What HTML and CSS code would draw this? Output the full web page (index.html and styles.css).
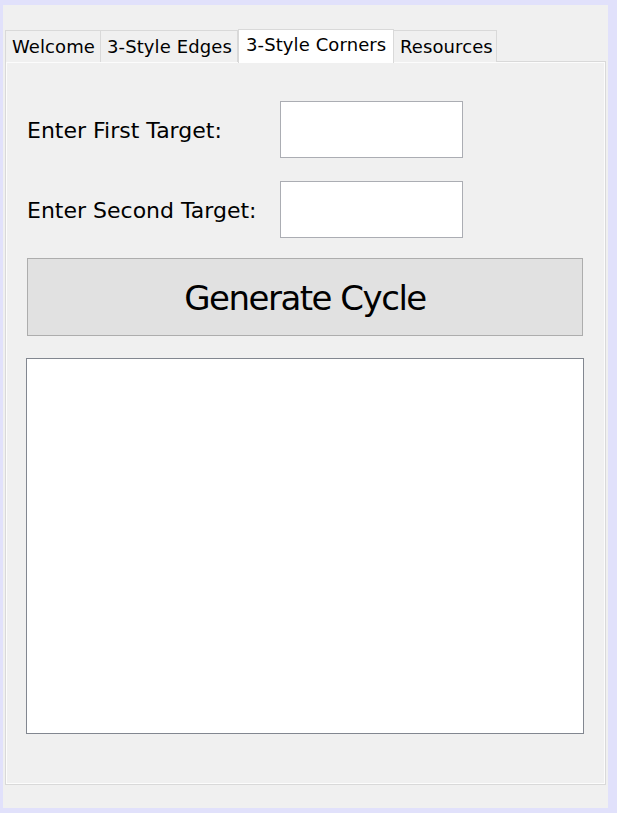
FILE: index.html
```html
<!DOCTYPE html>
<html>
<head>
<meta charset="utf-8">
<link rel="stylesheet" href="styles.css">
</head>
<body>
<div class="window">
  <div class="tabbar">
    <div class="tab">Welcome</div>
    <div class="tab">3-Style Edges</div>
    <div class="tab active">3-Style Corners</div>
    <div class="tab">Resources</div>
  </div>
  <div class="pane">
    <div class="row">
      <label class="label">Enter First Target:</label>
      <div class="input"></div>
    </div>
    <div class="row">
      <label class="label">Enter Second Target:</label>
      <div class="input"></div>
    </div>
    <div class="button">Generate Cycle</div>
    <div class="output"></div>
  </div>
</div>
</body>
</html>
```
FILE: styles.css
```css
html, body {
  margin: 0;
  padding: 0;
  background: #e1e1fb;
  width: 617px;
  height: 813px;
  overflow: hidden;
}
body {
  font-family: "DejaVu Sans", sans-serif;
  color: #000;
}
.window {
  box-sizing: border-box;
  margin: 5px 9px 0 3px;
  height: 803px;
  background: #f0f0f0;
  padding: 24px 2px 0 2px;
  display: flex;
  flex-direction: column;
}
.tabbar {
  display: flex;
  align-items: flex-end;
  height: 33px;
  position: relative;
  z-index: 1;
}
.tab {
  box-sizing: border-box;
  height: 32px;
  border: 1px solid #d9d9d9;
  border-bottom: none;
  border-left: none;
  background: #f0f0f0;
  font-size: 18px;
  letter-spacing: 0.1px;
  padding: 6px 0 0 6px;
  line-height: 20px;
  white-space: nowrap;
}
.tab:first-child { border-left: 1px solid #d9d9d9; width: 96px; }
.tab:nth-child(2) { width: 137px; }
.tab.active {
  width: 156px;
  height: 34px;
  background: #fff;
  padding-top: 5px;
  margin-bottom: -1px;
  padding-left: 7px;
  border-left: 1px solid #d9d9d9;
}
.tab:nth-child(4) { width: 103px; border-left: none; }
.pane {
  box-sizing: border-box;
  height: 724px;
  border: 1px solid #d9d9d9;
  box-shadow: inset 0 0 0 1px #fcfcfc;
  padding: 39px 21px 0 21px;
  display: flex;
  flex-direction: column;
  margin-top: -1px;
}
.row {
  display: flex;
  align-items: center;
  height: 57px;
  margin-bottom: 23px;
}
.label {
  width: 253px;
  font-size: 22px;
  letter-spacing: 0;
  white-space: nowrap;
  padding-top: 2px;
}
.input {
  box-sizing: border-box;
  width: 183px;
  height: 57px;
  background: #fff;
  border: 1px solid #abadb3;
}
.button {
  box-sizing: border-box;
  margin-top: -3px;
  width: 556px;
  height: 78px;
  background: #e1e1e1;
  border: 1px solid #adadad;
  display: flex;
  align-items: center;
  justify-content: center;
  font-size: 34px;
  letter-spacing: -1.5px;
  padding-top: 2px;
}
.output {
  box-sizing: border-box;
  margin: 22px 0 0 -1px;
  width: 558px;
  height: 376px;
  background: #fff;
  border: 1px solid #828790;
}
```
